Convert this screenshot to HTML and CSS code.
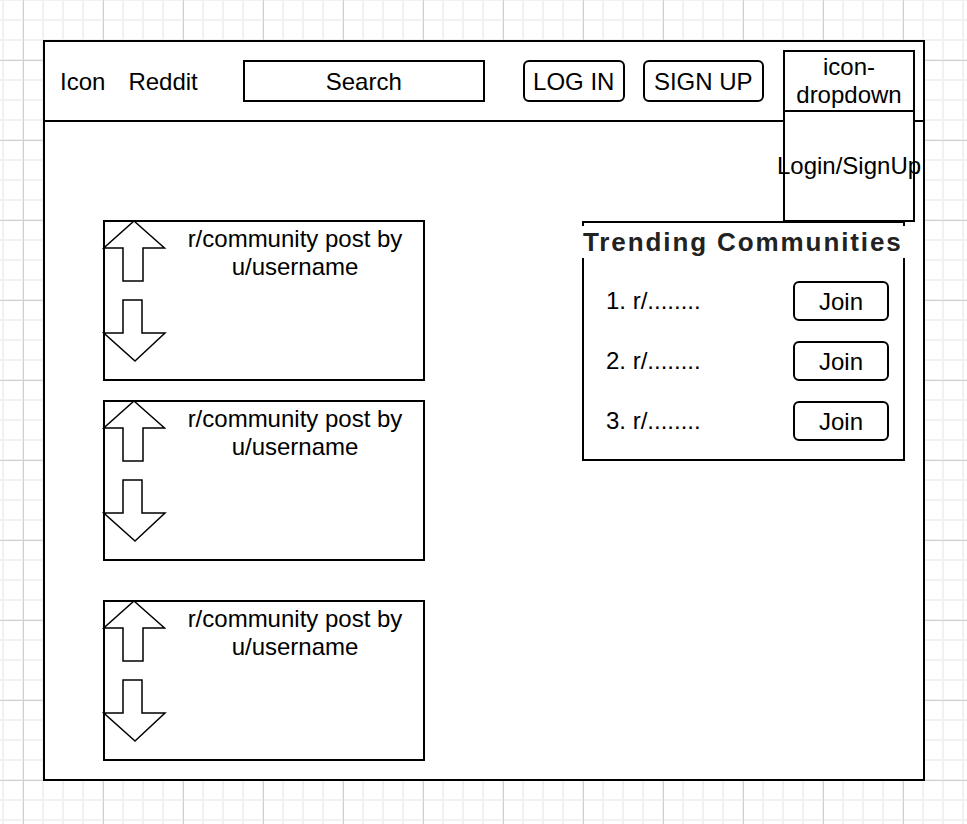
FILE: index.html
```html
<!DOCTYPE html>
<html lang="en">
<head>
    <meta charset="UTF-8">
    <meta name="viewport" content="width=device-width, initial-scale=1.0">
    <title>Reddit Wireframe</title>
    <link rel="stylesheet" href="styles.css">
</head>
<body>
    <div class="frame">
        <!-- Top bar -->
        <div class="topbar">
            <span class="logo">Icon</span>
            <span class="brand">Reddit</span>
            <div class="search">Search</div>
            <div class="btn btn-login">LOG IN</div>
            <div class="btn btn-signup">SIGN UP</div>
        </div>

        <!-- Dropdown menu -->
        <div class="dropdown">
            <div class="dropdown-head">icon-<br>dropdown</div>
            <div class="dropdown-body">Login/SignUp</div>
        </div>

        <div class="main">
            <div class="posts">
                <div class="post">
                    <svg class="votes" width="64" height="144" viewBox="0 0 64 144">
                        <polygon points="31,1 61.5,28 40,28 40,61 20,61 20,28 0.75,28" />
                        <polygon points="20,80 39,80 39,113 62,113 32,141 0.75,113 20,113" />
                    </svg>
                    <div class="post-text">r/community post by<br>u/username</div>
                </div>
                <div class="post">
                    <svg class="votes" width="64" height="144" viewBox="0 0 64 144">
                        <polygon points="31,1 61.5,28 40,28 40,61 20,61 20,28 0.75,28" />
                        <polygon points="20,80 39,80 39,113 62,113 32,141 0.75,113 20,113" />
                    </svg>
                    <div class="post-text">r/community post by<br>u/username</div>
                </div>
                <div class="post post-spaced">
                    <svg class="votes" width="64" height="144" viewBox="0 0 64 144">
                        <polygon points="31,1 61.5,28 40,28 40,61 20,61 20,28 0.75,28" />
                        <polygon points="20,80 39,80 39,113 62,113 32,141 0.75,113 20,113" />
                    </svg>
                    <div class="post-text">r/community post by<br>u/username</div>
                </div>
            </div>

            <div class="trending">
                <div class="trending-title">Trending Communities</div>
                <div class="trend-list">
                    <div class="trend-row">
                        <span>1. r/........</span>
                        <div class="join">Join</div>
                    </div>
                    <div class="trend-row">
                        <span>2. r/........</span>
                        <div class="join">Join</div>
                    </div>
                    <div class="trend-row">
                        <span>3. r/........</span>
                        <div class="join">Join</div>
                    </div>
                </div>
            </div>
        </div>
    </div>
</body>
</html>
```

FILE: styles.css
```css
body {
    margin: 0;
    min-height: 824px;
    font-family: "Liberation Sans", Arial, sans-serif;
    font-size: 24px;
    color: #000;
    background-color: #fff;
    background-image:
        linear-gradient(to right, #cfcfcf 0 1px, transparent 1px),
        linear-gradient(to bottom, #cfcfcf 0 1px, transparent 1px),
        linear-gradient(to right, #f1f1f1 0 2px, transparent 2px),
        linear-gradient(to bottom, #f1f1f1 0 2px, transparent 2px);
    background-size: 80px 80px, 80px 80px, 20px 20px, 20px 20px;
    background-position: 23px 0, 0 60px, 2px 0, 0 19px;
}
.frame {
    position: relative;
    box-sizing: border-box;
    width: 882px;
    height: 741px;
    margin: 40px 0 0 43px;
    border: 2px solid #000;
    background: #fff;
}
.topbar {
    display: flex;
    align-items: center;
    box-sizing: border-box;
    height: 80px;
    padding-left: 15px;
    border-bottom: 2px solid #000;
}
.logo,
.brand {
    padding-top: 2px;
}
.brand {
    margin-left: 23px;
}
.search {
    box-sizing: border-box;
    width: 242px;
    height: 42px;
    margin-left: 45px;
    padding-top: 2px;
    border: 2px solid #000;
    display: flex;
    align-items: center;
    justify-content: center;
}
.btn {
    box-sizing: border-box;
    height: 42px;
    padding-top: 2px;
    border: 2px solid #000;
    border-radius: 6px;
    display: flex;
    align-items: center;
    justify-content: center;
}
.btn-login {
    width: 102px;
    margin-left: 38px;
}
.btn-signup {
    width: 121px;
    margin-left: 18px;
}
.dropdown {
    position: absolute;
    left: 738px;
    top: 8px;
    width: 132px;
    box-sizing: border-box;
    border: 2px solid #000;
    background: #fff;
}
.dropdown-head {
    box-sizing: border-box;
    height: 60px;
    padding-top: 1px;
    border-bottom: 2px solid #000;
    line-height: 28px;
    text-align: center;
}
.dropdown-body {
    height: 108px;
    display: flex;
    align-items: center;
    justify-content: center;
    white-space: nowrap;
}
.main {
    display: flex;
    align-items: flex-start;
    padding: 98px 0 0 58px;
}
.posts {
    display: flex;
    flex-direction: column;
}
.post {
    display: flex;
    align-items: flex-start;
    box-sizing: border-box;
    width: 322px;
    height: 161px;
    border: 2px solid #000;
}
.post + .post {
    margin-top: 19px;
}
.post.post-spaced {
    margin-top: 39px;
}
.votes {
    flex: none;
    margin: -2px 0 0 -2px;
    overflow: visible;
}
.votes polygon {
    fill: #fff;
    stroke: #000;
    stroke-width: 1.5;
}
.post-text {
    flex: 1;
    padding-top: 3px;
    line-height: 28px;
    text-align: center;
}
.trending {
    box-sizing: border-box;
    width: 323px;
    height: 240px;
    margin: 1px 0 0 157px;
    border: 2px solid #000;
}
.trending-title {
    margin: 3px -2px 0;
    padding-left: 1px;
    height: 32px;
    line-height: 32px;
    background: #fff;
    color: #222;
    font-size: 26px;
    font-weight: bold;
    letter-spacing: 1.9px;
    white-space: nowrap;
}
.trend-list {
    display: flex;
    flex-direction: column;
    gap: 20px;
    padding: 23px 14px 0 22px;
}
.trend-row {
    display: flex;
    align-items: center;
    justify-content: space-between;
}
.join {
    box-sizing: border-box;
    width: 96px;
    height: 40px;
    padding-top: 2px;
    border: 2px solid #000;
    border-radius: 6px;
    display: flex;
    align-items: center;
    justify-content: center;
}
```
